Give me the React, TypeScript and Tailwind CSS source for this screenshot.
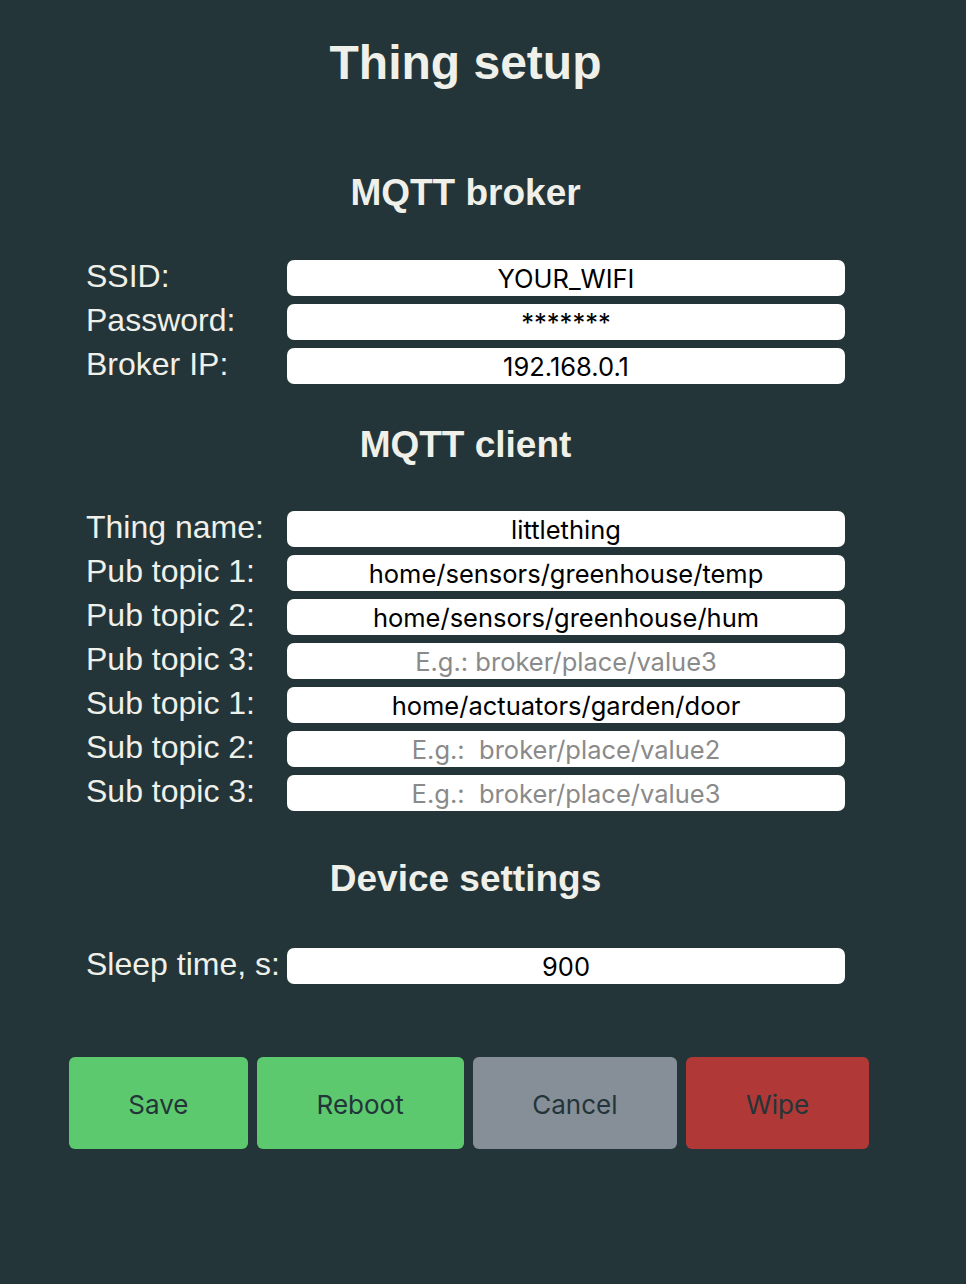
import React from 'react'

const broker = [
  { label: 'SSID:', value: 'YOUR_WIFI' },
  { label: 'Password:', value: '*******' },
  { label: 'Broker IP:', value: '192.168.0.1' },
]

const client = [
  { label: 'Thing name:', value: 'littlething' },
  { label: 'Pub topic 1:', value: 'home/sensors/greenhouse/temp' },
  { label: 'Pub topic 2:', value: 'home/sensors/greenhouse/hum' },
  { label: 'Pub topic 3:', placeholder: 'E.g.: broker/place/value3' },
  { label: 'Sub topic 1:', value: 'home/actuators/garden/door' },
  { label: 'Sub topic 2:', placeholder: 'E.g.:  broker/place/value2' },
  { label: 'Sub topic 3:', placeholder: 'E.g.:  broker/place/value3' },
]

function Row({ label, value, placeholder }: { label: string; value?: string; placeholder?: string }) {
  return (
    <div className="flex items-center h-[36px]">
      <label className="w-[201px] shrink-0 pb-[5px] text-[32px] leading-none text-[#f0f0ea] whitespace-nowrap">{label}</label>
      <input
        defaultValue={value}
        placeholder={placeholder}
        className="w-[558px] shrink-0 h-[36px] pt-[3px] rounded-[7px] bg-white text-center text-[25.5px] text-black placeholder:text-[#8a8a8a] outline-none font-['Inter',sans-serif]"
      />
    </div>
  )
}

function Heading({ children }: { children: React.ReactNode }) {
  return <h2 className="text-center text-[37px] leading-none font-bold text-[#f0f0ea]">{children}</h2>
}

export default function App() {
  return (
    <div className="min-h-screen bg-[#233538] font-['Liberation_Sans',Arial,sans-serif]">
      <div className="w-[800px] ml-[69px] pt-[39px]">
        <div className="pl-[17px] pr-[24px]">
          <h1 className="text-center text-[48px] leading-none font-bold text-[#f0f0ea]">Thing setup</h1>

          <div className="mt-[87px]">
            <Heading>MQTT broker</Heading>
          </div>
          <div className="mt-[49px] flex flex-col gap-[8px]">
            {broker.map(r => <Row key={r.label} {...r} />)}
          </div>

          <div className="mt-[42px]">
            <Heading>MQTT client</Heading>
          </div>
          <div className="mt-[48px] flex flex-col gap-[8px]">
            {client.map(r => <Row key={r.label} {...r} />)}
          </div>

          <div className="mt-[49px]">
            <Heading>Device settings</Heading>
          </div>
          <div className="mt-[51px] flex items-center h-[36px]">
            <label className="w-[201px] shrink-0 pb-[5px] text-[32px] leading-none text-[#f0f0ea] whitespace-nowrap">Sleep time, s:</label>
            <input
              defaultValue="900"
              className="w-[558px] shrink-0 h-[36px] pt-[3px] rounded-[7px] bg-white text-center text-[25.5px] text-black outline-none font-['Inter',sans-serif]"
            />
          </div>
        </div>

        {/* Buttons */}
        <div className="mt-[73px] flex gap-[9px] font-['Inter',sans-serif] text-[26px] text-[#233538]">
          <button className="w-[179px] h-[92px] pt-[3px] rounded-[6px] bg-[#5cc96f]">Save</button>
          <button className="w-[207px] h-[92px] pt-[3px] rounded-[6px] bg-[#5cc96f]">Reboot</button>
          <button className="w-[205px] h-[92px] pt-[3px] rounded-[6px] bg-[#868e98]">Cancel</button>
          <button className="w-[183px] h-[92px] pt-[3px] rounded-[6px] bg-[#b03836]">Wipe</button>
        </div>
      </div>
    </div>
  )
}
